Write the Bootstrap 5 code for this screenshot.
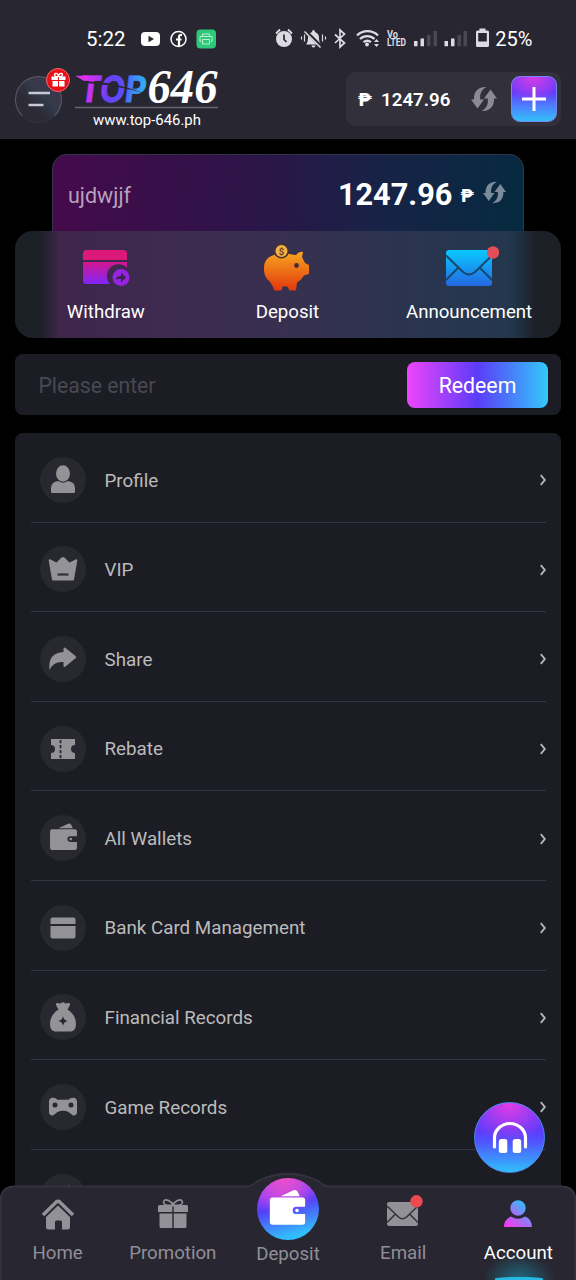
<!DOCTYPE html>
<html lang="en" data-bs-theme="dark">
<head>
<meta charset="utf-8">
<meta name="viewport" content="width=device-width, initial-scale=1">
<title>TOP646 - Account</title>
<link href="https://cdn.jsdelivr.net/npm/bootstrap@5.3.0/dist/css/bootstrap.min.css" rel="stylesheet">
<style>
body{background:#000;font-family:Roboto,"Liberation Sans",sans-serif;color:#fff;line-height:1.2}
.screen{height:1280px;width:576px}
svg{display:block;flex:none}
.top-area{height:139px;background:#282631}
.status{height:66px;padding:12px 43.500px 0 86px}
.clock{font-size:20.500px}
.apps{margin-left:14px}
.battery-text{font-size:20px}
.brandbar{padding:0 15.500px 0 15px;height:60px}
.menu-btn{width:47px;height:47px;border:1px solid #5a5c68;border-bottom-color:#33313c;background:linear-gradient(45deg,#2b2a35 35%,#343b4a 60%,#45304f);margin-top:6px}
.gift{width:24px;height:24px;background:#e8111a;border:1px solid #f06a6c;left:30px;top:-9px}
.logo{margin:-8px 0 0 11px}
.logo svg{margin-bottom:-6px}
.site-url{font-size:14.900px;line-height:18px;margin-top:1px}
.wallet-box{width:215px;height:54px;border-radius:9px;background:#31303b;padding:0 4px 0 12.500px;margin-top:6px}
.amount{font-weight:600;font-size:18.700px;padding-top:2px}
.plus{width:46px;height:46px;border-radius:9px;border:1px solid #7286f4;background:radial-gradient(ellipse 70% 58% at 48% 0,#d63be6 0,#9a3cf2 55%,transparent 100%),linear-gradient(#5b3cf8 35%,#5270ff 58%,#35c0f8);margin:-1px 0 0 14px}
.vip-card{margin:15px 52px 0;height:77px;border:1px solid #33344d;border-bottom:0;border-radius:15px 15px 0 0;background:linear-gradient(92deg,#450a4b,#331148 30%,#281748 48%,#172346 70%,#062a40);padding:4px 17px 0 15px}
.user{font-size:21.500px;color:#b9a0be;padding-top:1px}
.big{font-size:30.700px;font-weight:700;padding-top:1px}
.peso{font-weight:900}
.glass{margin:0 15px;height:107px;border-radius:18px;background:linear-gradient(90deg,#1b2026 0,#1d2027 26px,#40264b 44px,#3d2b50 28%,#37304f 50%,#2b344f 70%,#24374d 90%,#213448 500px,#1c2129 519px,#1d1f23);font-size:18.650px}
.glass>div{width:33.27%}
.act svg{margin-top:12px}
.act span{margin-top:9px;line-height:24px}
.code{margin:16px 15px 0;height:61px;border-radius:8px;background:#1c1d24;padding:0 13px 0 23.500px}
.code input{background:none!important;border:0;box-shadow:none!important;color:#fff;font-size:21.200px;padding:3px 0 0;width:320px}
.code input::placeholder{color:#484852;opacity:1}
.redeem{width:141px;height:46px;border:0;border-radius:8px;background:linear-gradient(90deg,#ee45fb,#5b3cf9 50%,#33c8fb);font-size:21.300px;color:#fff;padding:3px 0 0}
.options{margin:18px 15px 0;border-radius:8px;background:#1c1d24;padding:0 15px 0 16px}
.options .list-group-item{height:89.600px;background:none;border:0;border-bottom:1.500px solid #34353e;padding:5px 0 0 9px;color:#bbb;font-size:18.800px;border-radius:0}
.options span{padding-top:2px}
.disc{width:46px;height:46px;background:#282930;margin-right:18.500px}
.chev{margin-right:-1px;margin-top:1px}
.tabs{height:94px}
.tabs .shape{left:0;bottom:0}
.tabs .tab{width:20%;color:#918f97;font-size:18.700px;position:relative}
.tab svg{height:38px}
.tab span{margin-top:10px;line-height:22px}
.orb{width:62px;height:62px;margin-top:-8px;background:radial-gradient(circle at 42% 0,#f04fc8 0,#c84be0 25%,transparent 52%),linear-gradient(165deg,#8a3cf5 25%,#5540fa 45%,#31bdfb 85%)}
.help{width:71px;height:71px;right:31px;bottom:107px;border:1px solid #4c8bf0;background:radial-gradient(ellipse 62% 55% at 50% 2%,#e33be6 0,#a83cf0 45%,transparent 100%),linear-gradient(#5b3cfa 40%,#5151ff 55%,#2fc0fa)}
.glow{width:72px;height:30px;bottom:0;left:22px;background:radial-gradient(ellipse 50% 90% at 50% 100%,#1c8ba4aa,transparent)}
.glow::after{content:"";position:absolute;bottom:0;left:12px;width:48px;height:3px;border-radius:50% 50% 0 0;background:#25b9e3}
</style>
</head>
<body>
<svg width="0" height="0" class="position-absolute">
<defs>
<symbol id="refresh" viewBox="0 0 26 26"><path d="M15.500 1C6.500.5 2.500 6.500 3 13.500H0L6.500 22.500 13 13.500H9.300C8.500 8 10.500 3.500 15.500 1z"/><path transform="rotate(180 13 13)" d="M15.500 1C6.500.5 2.500 6.500 3 13.500H0L6.500 22.500 13 13.500H9.300C8.500 8 10.500 3.500 15.500 1z"/></symbol>
<symbol id="wallet" viewBox="0 0 28 28"><path d="M9 6 18.500 1.600Q20.500 1 21.500 2.800L23 6z"/><path fill-rule="evenodd" d="M3 7H25Q27 7 27 9V13.800H20.500A2.700 2.700 0 0 0 20.500 19.200H27V25Q27 27 25 27H3Q1 27 1 25V9Q1 7 3 7z"/><circle cx="21" cy="16.500" r="1.300"/></symbol>
<symbol id="chev" viewBox="0 0 8 14"><path d="M1.800 2.200 5.800 7 1.800 11.800" fill="none" stroke="#b5b5b9" stroke-width="1.900"/></symbol>
<linearGradient id="top" x1="0" x2="1"><stop offset="0" stop-color="#e02df0"/><stop offset=".25" stop-color="#b338f3"/><stop offset=".42" stop-color="#6a3ff7"/><stop offset=".65" stop-color="#5750f8"/><stop offset=".8" stop-color="#3e8cf7"/><stop offset="1" stop-color="#2eb3f3"/></linearGradient>
<linearGradient id="pink" x2="0" y2="1"><stop stop-color="#d2178e"/><stop offset="1" stop-color="#8125f8"/></linearGradient>
<linearGradient id="orange" x2="0" y2="1"><stop stop-color="#f7a51f"/><stop offset="1" stop-color="#e2380e"/></linearGradient>
<linearGradient id="blue" x2="0" y2="1"><stop stop-color="#09c9ff"/><stop offset="1" stop-color="#2467e2"/></linearGradient>
<linearGradient id="person" x1="0" y1="1" x2=".8" y2="0"><stop offset=".1" stop-color="#ef3df0"/><stop offset=".5" stop-color="#9b74f5"/><stop offset=".9" stop-color="#31bdfb"/></linearGradient>
</defs>
</svg>

<div class="screen position-relative overflow-hidden">
<header class="top-area">
  <div class="status d-flex align-items-center">
    <span class="clock">5:22</span>
    <svg class="apps" width="76" height="22" viewBox="0 0 76 22"><rect x="1" y="4" width="19" height="14" rx="4" fill="#fff"/><path d="M8.500 7.700v6.600l5.500-3.300z" fill="#282631"/><circle cx="38.500" cy="11" r="7.500" fill="none" stroke="#fff" stroke-width="1.500"/><path d="M42 7h-1.200Q39 7 39 9v9M36 11.500h5.500" fill="none" stroke="#fff" stroke-width="2.200"/><rect x="56.500" y="1.500" width="19.500" height="19" rx="4" fill="#2ec87a"/><path d="M62.500 8V6h7v2M61 13.500h-1V8.500h12v5h-1M62.500 11.500h7v4.500h-7z" fill="none" stroke="#b9f1d2" stroke-width="1"/></svg>
    <svg class="ms-auto" width="217" height="24" viewBox="275 27 217 24" fill="#dddbe2"><circle cx="285" cy="39" r="8"/><path d="M277 33.500l4-4M293 33.500l-4-4" stroke="#dddbe2" stroke-width="1.800"/><path d="M285 34.500v5l2.500 2.500" stroke="#282631" stroke-width="1.700" fill="none"/>
      <path d="M307 44.500q2-2 2-7 0-4 4-5.500 0-2 1.500-2t1.500 2q4 1.500 4 5.500 0 5 2 7zM312.500 45.500h4q0 2-2 2t-2-2z"/><path d="M306 30.500l16.500 16.500" stroke="#282631" stroke-width="3.200"/><path d="M305.500 31.500l16 16" stroke="#dddbe2" stroke-width="1.600"/><path d="M302.500 36.500v3M305.500 34.500v7M323.500 34.500v7M326.500 36.500v3" stroke="#dddbe2" stroke-width="1.200"/>
      <path d="M336 34.500l9.500 8.500-4.500 4V30l4.500 4-9.500 9" fill="none" stroke="#dddbe2" stroke-width="1.700"/>
      <path d="M358 35.500a15 15 0 0 1 21 0M361 39a10.500 10.500 0 0 1 14.500 0M364.500 42.200a6 6 0 0 1 7.500 0" fill="none" stroke="#dddbe2" stroke-width="2.300"/><circle cx="368" cy="44.500" r="1.900"/><path d="M375 42l2.500-3 2.500 3zM375 44l2.500 3 2.500-3z"/>
      <text x="388" y="37.500" font-size="10" font-weight="700" font-family="Roboto,sans-serif" textLength="11" lengthAdjust="spacingAndGlyphs">Vo</text><text x="388" y="46.300" font-size="10" font-weight="700" font-family="Roboto,sans-serif" textLength="19" lengthAdjust="spacingAndGlyphs">LTED</text>
      <path d="M415 41h3.500v5.300H415zM421.500 38.500h3.500v7.800h-3.500zM445.500 41h3.500v5.300h-3.500zM452 38.500h3.500v7.800H452z"/><path fill="#4a4852" d="M428 35h3.500v11.300H428zM434.500 31h3.500v15.300h-3.500zM458.500 35h3.500v11.300h-3.500zM464.500 31h3.500v15.300h-3.500z"/>
      <path fill-rule="evenodd" d="M480.500 28.500h6v2h2q1.500 0 1.500 1.500v13.500q0 1.500-1.500 1.500h-10q-1.500 0-1.500-1.500V32q0-1.500 1.500-1.500h2zM479.200 33v8.500h8.600V33z"/></svg>
    <span class="battery-text ms-1">25%</span>
  </div>
  <div class="brandbar d-flex align-items-center">
    <div class="menu-btn rounded-circle position-relative d-flex align-items-center justify-content-center">
      <svg width="24" height="16" viewBox="0 0 24 16" stroke="#c8c9d4" stroke-width="2.600"><path d="M1.500 2H23M1.500 14H16.500"/></svg>
      <div class="gift position-absolute rounded-circle d-flex align-items-center justify-content-center"><svg width="15" height="15" viewBox="0 0 15 15" fill="#fff"><path d="M.5 4.500H7V8H.5zM8 4.500h6.500V8H8zM1.500 9H7v5.500H1.500zM8 9h5.500v5.500H8z"/><path d="M7.500 4.500Q3.500 5 3.500 2.800 4 .8 6 1.600 7.500 2.800 7.500 4.500 7.500 2.800 9 1.600 11 .8 11.500 2.800 11.500 5 7.500 4.500z" fill="none" stroke="#fff" stroke-width="1.400"/></svg></div>
    </div>
    <div class="logo d-flex flex-column align-items-center">
      <svg width="148" height="60" viewBox="73 56 148 60"><g transform="translate(78 102) skewX(-7)"><text font-family="Inter,Roboto,sans-serif" font-weight="700" font-size="36" fill="url(#top)" stroke="url(#top)" stroke-width=".8" textLength="67" lengthAdjust="spacingAndGlyphs">TOP</text></g><path d="M75 75.700l9 5 4-.7v-4.300z" fill="#dd30ee"/><path d="M75 77.500l10 3.800q30 0 60 12.500-30-9.500-60-10.800z" fill="#282631"/><text x="147.500" y="102.500" font-family="'Liberation Serif',serif" font-weight="700" font-style="italic" font-size="48" fill="#fff" textLength="70" lengthAdjust="spacingAndGlyphs">646</text><path d="M75 107.500h143" stroke="#696773" stroke-width="1.300"/></svg>
      <span class="site-url">www.top-646.ph</span>
    </div>
    <div class="wallet-box ms-auto d-flex align-items-center">
      <span class="amount peso" style="margin-right:9px">₱</span><span class="amount">1247.96</span>
      <svg class="ms-auto" width="26" height="26" fill="#8c8b94"><use href="#refresh"/></svg>
      <button class="plus btn p-0 d-flex align-items-center justify-content-center"><svg width="26" height="26" viewBox="0 0 26 26"><path d="M13 1v24M1 13h24" stroke="#fff" stroke-width="3"/></svg></button>
    </div>
  </div>
</header>

<main>
  <section class="vip-card d-flex align-items-center">
    <span class="user">ujdwjjf</span>
    <span class="big ms-auto">1247.96</span>
    <span class="peso" style="font-size:18px;margin-left:8px;padding-top:2px">₱</span>
    <svg style="margin:0 0 6px 9px" width="23" height="23" fill="#7b8b9c"><use href="#refresh"/></svg>
  </section>
  <section class="glass d-flex">
    <div class="act d-flex flex-column align-items-center">
      <svg width="50" height="48" viewBox="80 243 50 48"><path d="M82 260V253.500Q82 250 85.500 250H122.500Q126 250 126 253.500V260z" fill="#dc1879"/><path d="M82 262H126V268A11 11 0 0 0 109 284H85.500Q82 284 82 280.500z" fill="url(#pink)"/><circle cx="120" cy="277.500" r="8.500" fill="#9524e2"/><path d="M115 280q0-4 5-4v-3.500l5 5-5 5V279q-3-1-5 1z" fill="#3c2449"/></svg>
      <span>Withdraw</span>
    </div>
    <div class="act d-flex flex-column align-items-center">
      <svg width="50" height="48" viewBox="263 243 50 48"><path d="M265 268q0-12 14-14h12q3 1 6 1 3-4 7-3l-1 5 3 6 4 2v9l-5 1.500q-3 5-7 7l-1 8h-6.500l-2-4h-5l-1 4h-7q-3-8-7-11-4-5-3.500-11.500z" fill="url(#orange)"/><circle cx="297.500" cy="265.500" r="2.400" fill="#4c2735"/><circle cx="282.500" cy="251" r="7.500" fill="#4c342d"/><circle cx="282.500" cy="251" r="6" fill="#f2b14b"/><text x="282.500" y="254.500" text-anchor="middle" font-size="9.500" font-weight="700" font-family="Roboto" fill="#77401d">$</text></svg>
      <span>Deposit</span>
    </div>
    <div class="act d-flex flex-column align-items-center">
      <svg width="60" height="48" viewBox="439 243 60 48"><rect x="446" y="250" width="46" height="36" rx="3" fill="url(#blue)"/><path d="M446 255.500L463 272Q469 277 475 272L492 255.500M446 280L458 268M492 280L480 268" fill="none" stroke="#16496d" stroke-width="2"/><circle cx="493" cy="252.500" r="6.200" fill="#e34e59"/></svg>
      <span>Announcement</span>
    </div>
  </section>

  <section class="code d-flex align-items-center">
    <input class="form-control" placeholder="Please enter">
    <button class="redeem btn ms-auto">Redeem</button>
  </section>

  <div class="options list-group">
    <div class="list-group-item d-flex align-items-center"><div class="disc rounded-circle d-flex align-items-center justify-content-center"><svg width="28" height="32" viewBox="0 0 28 32" fill="#929297"><ellipse cx="14" cy="9.500" rx="7" ry="8.300"/><path d="M2 28v-4q0-6 7.500-7 4.500 3.300 9 0Q26 18 26 24v4q0 1-1 1H3q-1 0-1-1z"/></svg></div><span>Profile</span><svg class="chev ms-auto" width="8" height="14"><use href="#chev"/></svg></div>
    <div class="list-group-item d-flex align-items-center"><div class="disc rounded-circle d-flex align-items-center justify-content-center"><svg width="30" height="26" viewBox="0 0 30 26"><path d="M5 24.500Q4 24.500 4 23.500L.7 4.500Q.5 2.800 2.500 3.500L8.500 6.500 13.500 1.500Q15 .5 16.500 1.500L21.500 6.500 27.500 3.500Q29.500 2.800 29.300 4.500L26 23.500Q26 24.500 25 24.500z" fill="#929297"/><path d="M9.500 18.500h11" stroke="#303036" stroke-width="2.200"/></svg></div><span>VIP</span><svg class="chev ms-auto" width="8" height="14"><use href="#chev"/></svg></div>
    <div class="list-group-item d-flex align-items-center"><div class="disc rounded-circle d-flex align-items-center justify-content-center"><svg width="30" height="26" viewBox="0 0 30 26"><path d="M1.500 24Q-.5 7 15.500 6V2.500Q16 .8 17.500 2L27.500 10Q28.800 11.200 27.500 12.300L17.500 20.500Q16 21.500 15.500 20V16Q5.500 15 1.500 24z" fill="#929297"/></svg></div><span>Share</span><svg class="chev ms-auto" width="8" height="14"><use href="#chev"/></svg></div>
    <div class="list-group-item d-flex align-items-center"><div class="disc rounded-circle d-flex align-items-center justify-content-center"><svg width="26" height="22" viewBox="0 0 26 22"><path d="M1 1H25V7A4 4 0 0 0 25 15V21H1V15A4 4 0 0 0 1 7z" fill="#929297"/><path d="M10.500 1v20" stroke="#282930" stroke-width="1.800" stroke-dasharray="3.200 1.800" stroke-dashoffset="-1"/></svg></div><span>Rebate</span><svg class="chev ms-auto" width="8" height="14"><use href="#chev"/></svg></div>
    <div class="list-group-item d-flex align-items-center"><div class="disc rounded-circle d-flex align-items-center justify-content-center"><svg width="29" height="29" fill="#929297" style="margin-bottom:4px"><use href="#wallet"/></svg></div><span>All Wallets</span><svg class="chev ms-auto" width="8" height="14"><use href="#chev"/></svg></div>
    <div class="list-group-item d-flex align-items-center"><div class="disc rounded-circle d-flex align-items-center justify-content-center"><svg width="26" height="22" viewBox="0 0 26 22" fill="#929297"><path d="M.5 7V2.500Q.5.500 2.500.500h21q2 0 2 2V7zM.5 9h25v10.500q0 2-2 2h-21q-2 0-2-2z"/></svg></div><span>Bank Card Management</span><svg class="chev ms-auto" width="8" height="14"><use href="#chev"/></svg></div>
    <div class="list-group-item d-flex align-items-center"><div class="disc rounded-circle d-flex align-items-center justify-content-center"><svg width="28" height="30" viewBox="0 0 28 30"><path d="M7 3Q6.500.5 9.500 1 11 2 12 1q2-1.500 4 0 1 1 2.500 0Q21.500.5 21 3L18.500 7.500Q27 13 27 22q0 7-5 7.500H6Q1 29 1 22 1 13 9.500 7.500z" fill="#929297"/><path d="M14 14q.5 4.500 5 5-4.500.5-5 5-.5-4.500-5-5 4.500-.5 5-5z" fill="#25262d"/></svg></div><span>Financial Records</span><svg class="chev ms-auto" width="8" height="14"><use href="#chev"/></svg></div>
    <div class="list-group-item d-flex align-items-center"><div class="disc rounded-circle d-flex align-items-center justify-content-center"><svg width="30" height="20" viewBox="0 0 30 20"><path d="M1 4Q2 .5 5 .8 8 1 9.500 2.800h11Q22 1 25 .8 28 .5 29 4V16q-1 3-4 2.500l-4.500-3.500Q15 12.500 9.500 15L5 18.500Q2 19 1 16z" fill="#929297"/><circle cx="7" cy="8" r="2.500" fill="#27282f"/><circle cx="23" cy="8" r="2.500" fill="#27282f"/></svg></div><span>Game Records</span><svg class="chev ms-auto" width="8" height="14"><use href="#chev"/></svg></div>
    <div class="list-group-item d-flex align-items-center"><div class="disc rounded-circle d-flex align-items-center justify-content-center"><svg width="24" height="24" viewBox="0 0 24 24"><path d="M18 0l5 5L7 21l-6 2 2-7z" fill="#929297"/></svg></div></div>
  </div>
</main>

<button class="help btn p-0 rounded-circle position-absolute d-flex align-items-center justify-content-center"><svg width="36" height="34" viewBox="0 0 36 34"><path d="M2.500 26V17A15.500 14.500 0 0 1 33.500 17V26" fill="none" stroke="#fff" stroke-width="3.200" stroke-linecap="round"/><rect x="6.800" y="18" width="8.500" height="14" rx="2.500" fill="#fff"/><rect x="20.700" y="18" width="8.500" height="14" rx="2.500" fill="#fff"/></svg></button>

<nav class="tabs position-absolute bottom-0 start-0 w-100 d-flex">
  <svg class="shape position-absolute" style="height:108px" width="576" height="108" viewBox="0 0 576 108"><path d="M.5 109V29Q.5 14.500 15 14.500H246Q252 14.500 257 9.500 288-6 319 9.500 324 14.500 330 14.500H561Q575.500 14.500 575.500 29V109z" fill="#282631" stroke="#34333d" stroke-width="1.800"/></svg>
  <div class="tab d-flex flex-column align-items-center"><svg style="margin-top:8px" width="34" height="38" viewBox="0 0 34 38"><path d="M2 21L15 8.200Q17 6.500 19 8.200L32 21" fill="none" stroke="#929197" stroke-width="3.500"/><path d="M17 11.500L29 23V33q0 2.500-2.500 2.500H21V28q0-1.500-1.500-1.500h-4Q14 26.500 14 28v7.500H7.500Q5 35.500 5 33V23z" fill="#929197"/></svg><span>Home</span></div>
  <div class="tab d-flex flex-column align-items-center"><svg style="margin-top:8px" width="32" height="38" viewBox="0 0 32 38"><g fill="#929197"><path d="M1 12.500Q1 11 2.500 11H15.300V18H1zM16.700 11H29.500Q31 11 31 12.500V18H16.700zM2.500 19.500H15.300V34H4Q2.500 34 2.500 32.500zM16.700 19.500H29.500V32.500Q29.500 34 28 34H16.700z"/></g><path d="M16 11Q7 12 6.500 8.500 7 4.500 11.500 6.500 15 8 16 11 17 8 20.500 6.500 25 4.500 25.500 8.500 25 12 16 11z" fill="none" stroke="#929197" stroke-width="1.700"/></svg><span>Promotion</span></div>
  <div class="tab d-flex flex-column align-items-center"><div class="orb rounded-circle d-flex align-items-center justify-content-center"><svg width="39" height="39" fill="#fff" style="margin-bottom:5px"><use href="#wallet"/></svg></div><span style="margin-top:3px">Deposit</span></div>
  <div class="tab d-flex flex-column align-items-center"><svg style="margin-top:8px" width="40" height="38" viewBox="383 1194 40 38"><rect x="387" y="1202" width="31" height="24" rx="2" fill="#929197"/><path d="M387 1206L398.500 1217Q402.500 1220.500 406.500 1217L418 1206M387 1222.500l8-8M418 1222.500l-8-8" fill="none" stroke="#34323d" stroke-width="1.600"/><circle cx="416.500" cy="1201.300" r="6.200" fill="#ed4a50"/></svg><span>Email</span></div>
  <div class="tab d-flex flex-column align-items-center text-white"><div class="glow position-absolute"></div><svg style="margin-top:7px" width="30" height="38" viewBox="0 0 30 38"><path d="M15 7.300a7.700 7.700 0 1 1 0 15.400 7.700 7.700 0 1 1 0-15.400zM1 34Q1 26 8 23.500q7 4.500 14 0 7 2.500 7 10.500z" fill="url(#person)"/></svg><span style="margin-top:11px">Account</span></div>
</nav>
</div>
<script src="https://cdn.jsdelivr.net/npm/bootstrap@5.3.0/dist/js/bootstrap.bundle.min.js"></script>
</body>
</html>
